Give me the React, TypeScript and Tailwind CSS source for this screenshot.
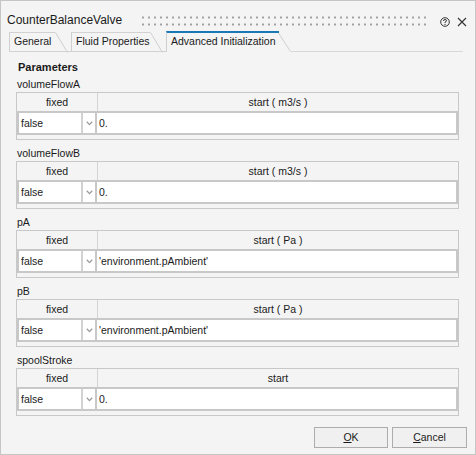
import React from "react";

type Param = { name: string; unit: string; value: string };

const params: Param[] = [
  { name: "volumeFlowA", unit: "start ( m3/s )", value: "0." },
  { name: "volumeFlowB", unit: "start ( m3/s )", value: "0." },
  { name: "pA", unit: "start ( Pa )", value: "'environment.pAmbient'" },
  { name: "pB", unit: "start ( Pa )", value: "'environment.pAmbient'" },
  { name: "spoolStroke", unit: "start", value: "0." },
];

function Tab({ label, active, width }: { label: string; active?: boolean; width: string }) {
  return (
    <div className={`flex h-full items-stretch ${active ? "" : "border-b border-[#d2d2d2]"}`}>
      <div
        className={`flex items-center whitespace-nowrap border-l border-[#cfcfcf] pl-[4px] ${width} ${
          active ? "border-t-2 border-t-[#1a78b4] pb-[1px]" : "mt-[1px] border-t border-t-[#d2d2d2]"
        }`}
      >
        {label}
      </div>
      <svg width="13" height="21" viewBox="0 0 13 21" className={active ? "" : "mt-[1px]"}>
        {active && <line x1="0" y1="1" x2="1" y2="1" stroke="#1a78b4" strokeWidth="2" />}
        <line x1="0.5" y1={active ? 2 : 0.5} x2="12.5" y2="20.5" stroke="#cfcfcf" strokeWidth="1" />
      </svg>
    </div>
  );
}

function ParamTable({ p }: { p: Param }) {
  return (
    <div>
      <div className="mt-[5px] h-4 pl-[1px] leading-4">{p.name}</div>
      <div className="h-[48px] border border-[#c8c8c8]">
        <div className="flex h-[18px] leading-[18px]">
          <div className="w-[81px] border-r border-[#d4d4d4] text-center">fixed</div>
          <div className="flex-1 text-center">{p.unit}</div>
        </div>
        <div className="flex h-[24px] border-2 border-[#c8c8c8] bg-white leading-[20px]">
          <div className="w-[64px] border-r-2 border-[#d2d2d2] pl-[2px]">false</div>
          <div className="flex w-[14px] items-center justify-center border-r-2 border-[#c8c8c8]">
            <svg width="7" height="5" viewBox="0 0 7 5">
              <path d="M0.8 0.8 L3.5 3.6 L6.2 0.8" fill="none" stroke="#9a9a9a" strokeWidth="1.3" />
            </svg>
          </div>
          <div className="flex-1 pl-[2px]">{p.value}</div>
        </div>
      </div>
    </div>
  );
}

export default function App() {
  return (
    <div className="flex h-[455px] w-[476px] flex-col border border-[#c6c6c6] bg-[#f4f4f4] font-['Liberation_Sans',Arial,sans-serif] text-[10.5px] text-[#1a1a1a]">
      {/* Title bar */}
      <div className="flex h-[30px] items-end pb-[3px] pl-[6px] pr-[8px]">
        <div className="w-[133px] whitespace-nowrap text-[12px] leading-4">CounterBalanceValve</div>
        <div className="mb-[2px] h-[10px] flex-1 bg-[radial-gradient(circle,#a0a0a0_0.9px,transparent_1.3px)] bg-[length:6px_7px] bg-[position:0_-2px]" />
        <div className="ml-[10px] flex items-center gap-[7px] pb-[1px]">
          <svg width="10" height="10" viewBox="0 0 10 10">
            <circle cx="5" cy="5" r="4.3" fill="none" stroke="#333" strokeWidth="1" />
            <path d="M3.5 4 Q3.5 2.5 5 2.5 Q6.5 2.5 6.5 3.8 Q6.5 4.6 5 5.2 L5 6" fill="none" stroke="#333" strokeWidth="1" />
            <circle cx="5" cy="7.4" r="0.6" fill="#333" />
          </svg>
          <svg width="10" height="10" viewBox="0 0 10 10">
            <path d="M1 1 L9 9 M9 1 L1 9" stroke="#333" strokeWidth="1.1" />
          </svg>
        </div>
      </div>

      {/* Tabs */}
      <div className="flex h-[21px] pl-[8px] pr-[12px]">
        <Tab label="General" width="w-[46px]" />
        <div className="w-[3px] border-b border-[#d2d2d2]" />
        <Tab label="Fluid Properties" width="w-[79px]" />
        <div className="w-[3px] border-b border-[#d2d2d2]" />
        <Tab label="Advanced Initialization" active width="w-[112px]" />
        <div className="flex-1 border-b border-[#d8d8d8]" />
      </div>

      {/* Content */}
      <div className="flex flex-1 flex-col pl-[15px] pr-[16px] pt-[7px]">
        <div className="h-4 pl-[2px] text-[11px] font-bold leading-4">Parameters</div>
        <div className="-mt-[4px]">
          {params.map((p) => (
            <ParamTable key={p.name} p={p} />
          ))}
        </div>
        <div className="mt-[11px] flex justify-end gap-[4px]">
          <button className="h-[21px] w-[74px] border border-[#adadad] bg-[#f0f0f0] leading-[19px]">
            <span className="underline">O</span>K
          </button>
          <button className="-mr-[8px] h-[21px] w-[75px] border border-[#adadad] bg-[#f0f0f0] leading-[19px]">
            <span className="underline">C</span>ancel
          </button>
        </div>
      </div>
    </div>
  );
}
